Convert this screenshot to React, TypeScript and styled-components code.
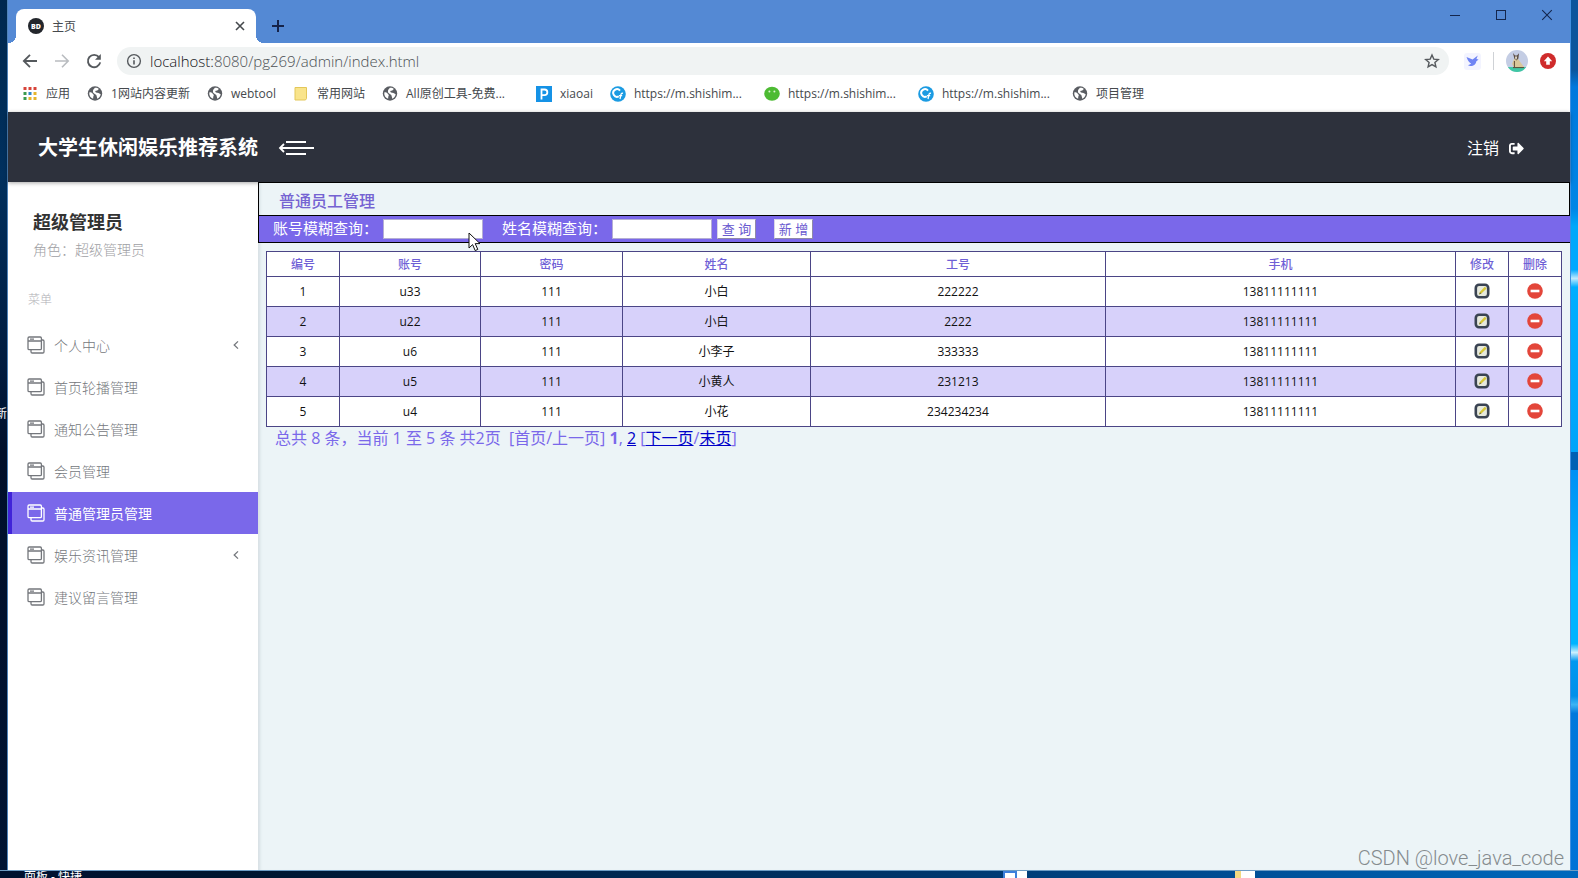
import React from 'react';
import styled, { createGlobalStyle } from 'styled-components';
import { FaSignOutAlt } from 'react-icons/fa';

const purple = '#7a68ea';
const line = '#4b4586';

const Global = createGlobalStyle`
  *, *::before, *::after { box-sizing: border-box; }
  body { margin: 0; font-family: "Open Sans", "Noto Sans CJK SC", sans-serif; font-size: 12px; color: #222; }
  button, input { font-family: inherit; }
`;

/* ---------- desktop behind the window ---------- */

const Desktop = styled.div`
  display: grid;
  grid-template-columns: 8px minmax(0, 1fr) 8px;
  grid-template-rows: minmax(0, 1fr) 8px;
  height: 100vh;
  overflow: hidden;
`;

const LeftEdge = styled.div`
  display: flex;
  justify-content: flex-end;
  align-items: center;
  overflow: hidden;
  padding-bottom: 42px;
  border-right: 1px solid #4f83b8;
  background: linear-gradient(#00284f, #00305e 20%, #001c40 42%, #000f2a 52%, #001433);
  color: #fff;
  font-size: 12px;
  line-height: 16px;
`;

const RightEdge = styled.div`
  border-left: 1px solid #3f8fe0;
  background: linear-gradient(
    #0a559c 0, #0a559c 8%, #0078dd 10%, #0086e6 24%, #00a8fa 26%, #00a8ff 31%,
    #bfeaff 32%, #00aeff 33%, #00a4fa 52%, #0060b4 52%, #0060b4 54%,
    #0090f4 54%, #00b4ff 66%, #00b4ff 74%, #c9f0ff 75%, #0098f0 76%,
    #0090ea 80%, #3cb4f4 81%, #0078dc 82%, #0072d6 100%
  );
`;

const BottomEdge = styled.div`
  grid-column: 1 / -1;
  display: flex;
  align-items: flex-start;
  overflow: hidden;
  padding-left: 24px;
  border-top: 1px solid #6d9cc4;
  background: linear-gradient(90deg, #001230, #00152f 15%, #00376e 60%, #005098 80%, #0068bd);
  color: #fff;
  font-size: 12px;
  line-height: 12px;
`;

const TaskWord = styled.span`
  flex: 0 0 63%;
`;

const TaskDocument = styled.span`
  flex: 0 0 14px;
  width: 14px;
  height: 8px;
  border: 2px solid #3d7fdb;
  border-bottom: 0;
  background: #fff;
`;

const TaskGap = styled.span`
  flex: 0 0 14%;
  border-left: 10px solid #fff;
  height: 8px;
`;

const TaskFolder = styled.span`
  flex: 0 0 20px;
  height: 8px;
  border-left: 6px solid #f3d982;
  background: #fff;
`;

/* ---------- browser window ---------- */

const Browser = styled.div`
  display: flex;
  flex-direction: column;
  min-width: 0;
  background: #fff;
`;

const TitleBar = styled.div`
  display: flex;
  align-items: flex-end;
  height: 43px;
  padding-left: 8px;
  background: #5489d4;
`;

const Tab = styled.div`
  position: relative;
  display: flex;
  align-items: center;
  width: 240px;
  height: 34px;
  padding: 0 10px 0 12px;
  border-radius: 8px 8px 0 0;
  background: #fff;
  color: #45494d;

  &::before, &::after {
    content: '';
    position: absolute;
    bottom: 0;
    width: 8px;
    height: 8px;
  }
  &::before { left: -8px; background: radial-gradient(circle at 0 0, transparent 8px, #fff 8px); }
  &::after { right: -8px; background: radial-gradient(circle at 100% 0, transparent 8px, #fff 8px); }
`;

const Favicon = styled.span`
  display: flex;
  align-items: center;
  justify-content: center;
  width: 16px;
  height: 16px;
  margin-right: 8px;
  border-radius: 50%;
  background: #23262c;
  color: #fff;
  font-size: 7px;
  font-weight: 800;
`;

const TabTitle = styled.span`
  flex: 1;
`;

const IconButton = styled.button<{ $size?: number }>`
  display: flex;
  align-items: center;
  justify-content: center;
  flex: none;
  width: ${(p) => p.$size ?? 16}px;
  height: ${(p) => p.$size ?? 16}px;
  padding: 0;
  border: 0;
  background: none;
  color: inherit;
`;

const NewTab = styled.div`
  display: flex;
  align-items: center;
  height: 34px;
  margin-left: 12px;
  color: #15234a;
`;

const WindowControls = styled.div`
  display: flex;
  align-self: flex-start;
  gap: 30px;
  margin-left: auto;
  padding: 7px 15px 0 0;
  color: #14264d;
`;

const Toolbar = styled.div`
  display: flex;
  align-items: center;
  height: 36px;
  padding: 0 14px;
  color: #55595d;
`;

const NavButtons = styled.div`
  display: flex;
  gap: 16px;
`;

const AddressBar = styled.div`
  display: flex;
  align-items: center;
  flex: 1;
  min-width: 0;
  height: 28px;
  margin: 0 15px;
  padding: 0 9px;
  border-radius: 14px;
  background: #f0f3f3;
`;

const UrlText = styled.span`
  flex: 1;
  margin-left: 8px;
  font-size: 15px;
  line-height: 20px;
  font-weight: 300;
  color: #4c5054;
`;

const UrlHost = styled.span`
  color: #101113;
`;

const Extensions = styled.div`
  display: flex;
  align-items: center;
  gap: 12px;
`;

const Separator = styled.span`
  width: 1px;
  height: 18px;
  background: #cfd2d6;
`;

const Bookmarks = styled.nav`
  display: flex;
  align-items: center;
  gap: 17px;
  height: 33px;
  padding: 0 14px 4px;
`;

const Bookmark = styled.a<{ $wide?: boolean }>`
  display: flex;
  align-items: center;
  gap: 8px;
  flex: none;
  width: ${(p) => (p.$wide ? '137px' : 'auto')};
  white-space: nowrap;
  color: #45494d;
  font-size: 12px;
  line-height: 16px;
  text-decoration: none;

  svg { width: 16px; }
`;

/* ---------- admin page ---------- */

const PageHeader = styled.header`
  position: relative;
  display: flex;
  align-items: center;
  flex: none;
  height: 70px;
  padding: 2px 46px 0 30px;
  background: #2d313c;
  box-shadow: 0 1px 4px rgba(0, 0, 0, 0.35);
  color: #fff;
`;

const SiteName = styled.h1`
  margin: 0 20px 0 0;
  font-size: 20px;
  line-height: 30px;
  font-weight: 700;
`;

const LogoutLink = styled.a`
  display: flex;
  align-items: center;
  gap: 10px;
  margin-left: auto;
  color: #fff;
  font-size: 16px;
  line-height: 24px;
  text-decoration: none;
`;

const PageBody = styled.div`
  display: flex;
  flex: 1;
  min-height: 0;
`;

const Sidebar = styled.aside`
  flex: none;
  width: 250px;
  padding-top: 24px;
  background: #fff;
`;

const UserName = styled.h2`
  margin: 0 25px;
  font-size: 18px;
  line-height: 32px;
  color: #333;
`;

const UserRole = styled.p`
  margin: 0 25px;
  font-size: 14px;
  line-height: 24px;
  font-weight: 300;
  color: #a0a0a4;
`;

const MenuCaption = styled.p`
  margin: 26px 20px 12px;
  font-size: 12px;
  line-height: 24px;
  font-weight: 300;
  color: #b0b0b5;
`;

const Menu = styled.ul`
  margin: 0;
  padding: 0;
  list-style: none;
`;

const MenuLink = styled.a<{ $active: boolean }>`
  display: flex;
  align-items: center;
  height: 42px;
  padding: 0 18px 0 15px;
  border-left: 4px solid ${(p) => (p.$active ? '#4023d8' : 'transparent')};
  background: ${(p) => (p.$active ? purple : 'transparent')};
  color: ${(p) => (p.$active ? '#fff' : '#74777c')};
  font-size: 14px;
  font-weight: ${(p) => (p.$active ? 400 : 300)};
  text-decoration: none;
`;

const MenuLabel = styled.span`
  flex: 1;
  margin-left: 9px;
`;

const Content = styled.main`
  position: relative;
  flex: 1;
  min-width: 0;
  background: #ecf4f7;
  box-shadow: inset 4px 0 3px -2px rgba(60, 70, 90, 0.12);
`;

const PanelTitle = styled.h3`
  display: flex;
  align-items: center;
  height: 34px;
  margin: 0;
  padding: 1px 20px 0;
  border: 1px solid #000;
  color: #7563d2;
  font-size: 16px;
  font-weight: 500;
`;

const SearchForm = styled.form`
  display: flex;
  align-items: center;
  height: 27px;
  padding-left: 14px;
  border: solid #000;
  border-width: 0 0 1px 1px;
  background: ${purple};
  color: #fff;
  font-size: 15px;
  line-height: 20px;
`;

const Field = styled.label`
  display: flex;
  align-items: center;
  gap: 5px;
  margin-right: 19px;

  & + & { margin-right: 5px; }
`;

const FieldName = styled.span`
  padding-bottom: 3px;
`;

const TextInput = styled.input`
  width: 100px;
  height: 20px;
  padding: 0 4px;
  border: 1px solid #b4aed4;
  background: #fff;
  font-size: 12px;
`;

const FormButton = styled.button`
  width: 39px;
  height: 20px;
  margin-right: 18px;
  padding: 0;
  border: 1px solid #d8d6e6;
  border-right-color: #8f8aa8;
  border-bottom-color: #8f8aa8;
  background: #fff;
  color: #6a5ad0;
  font-size: 13px;
  line-height: 18px;
`;

const TableWrap = styled.div`
  padding: 8px 8px 0;
`;

const DataTable = styled.table`
  width: 100%;
  table-layout: fixed;
  border-collapse: collapse;
  border: 1px solid ${line};
  background: #fff;
  text-align: center;
  font-size: 12px;
  line-height: 16px;
`;

const HeadCell = styled.th`
  height: 25px;
  padding: 2px 0 0;
  border: 1px solid ${line};
  color: #6f5fd6;
  font-weight: 500;
`;

const Row = styled.tr`
  &:nth-child(even) { background: #d7d1fa; }
`;

const Cell = styled.td`
  height: 30px;
  padding: 0;
  border: 1px solid ${line};
  color: #111;
`;

const CellButton = styled(IconButton)`
  margin: 0 auto 2px;
`;

const Pager = styled.p`
  margin: 0;
  padding-left: 9px;
  white-space: pre;
  color: ${purple};
  font-size: 16px;
  line-height: 22px;
  font-weight: 400;

  b { font-weight: 700; }
  a { color: #0000c8; }
`;

const Watermark = styled.div`
  position: absolute;
  right: 6px;
  bottom: 0;
  color: #858b8e;
  font-family: Roboto, "Liberation Sans", sans-serif;
  font-size: 20px;
  font-weight: 300;
  line-height: 24px;
`;

const Pointer = styled.svg`
  position: absolute;
  left: 210px;
  top: 50px;
`;

/* ---------- drawings ---------- */

const Globe = () => (
  <svg width="15" height="15" viewBox="0 0 15 15">
    <circle cx="7.5" cy="7.5" r="7.2" fill="#5a5d62" />
    <path d="M1.8 6.6C3.4 5.8 4.6 6.6 5.4 8 6.4 8.6 6.6 9.6 5.8 10.6L5.6 12.8C3 12 1.4 9.6 1.8 6.6Z M7.4 1.7C9 1.5 10.4 2 11.4 2.9L9.8 4.6 7.6 5 8.4 6.6 11 7 13.2 8.2C12.8 10.4 11.6 12 9.8 12.8L9.4 11 8.8 9 6.6 7.6 5.4 6.2 5.6 4Z" fill="#fff" />
  </svg>
);

const AppsGrid = () => (
  <svg width="15" height="15" viewBox="0 0 15 15">
    {['#d7443a', '#d7443a', '#d7443a', '#3b9a4e', '#2f86c9', '#e6b52c', '#3b9a4e', '#e6b52c', '#e6b52c'].map((c, i) => (
      <rect key={i} x={1 + (i % 3) * 5} y={1 + Math.floor(i / 3) * 5} width="3" height="3" fill={c} />
    ))}
  </svg>
);

const Folder = () => (
  <svg width="14" height="15" viewBox="0 0 14 15">
    <path d="M1 1.5H12.5V12.5L11.5 14H1Z" fill="#f9e48b" stroke="#e3c75a" />
  </svg>
);

const PMark = () => (
  <svg width="16" height="16" viewBox="0 0 16 16">
    <rect width="16" height="16" fill="#1592e6" />
    <path d="M5.5 13.5V3.5H8.5A2.8 2.8 0 0 1 8.5 9.2H5.5" fill="none" stroke="#fff" strokeWidth="1.8" />
  </svg>
);

const CMark = () => (
  <svg width="16" height="16" viewBox="0 0 16 16">
    <circle cx="8" cy="8" r="7.8" fill="#1b9be2" />
    <path d="M10 4.6A3.8 3.8 0 1 0 8.8 10.4" fill="none" stroke="#fff" strokeWidth="2" />
    <path d="M13 7.4C11.4 6.8 11 8 10.8 9.2L10 13M9 9.6H12.2" fill="none" stroke="#fff" strokeWidth="1.3" />
  </svg>
);

const GreenFace = () => (
  <svg width="16" height="16" viewBox="0 0 16 16">
    <ellipse cx="8" cy="7.8" rx="7.8" ry="7" fill="#4dbb33" />
    <circle cx="5.4" cy="5.6" r="1" fill="#d9f5d0" />
    <circle cx="10.4" cy="5.6" r="1" fill="#d9f5d0" />
  </svg>
);

const CloseMark = ({ size, width }: { size: number; width: number }) => (
  <svg width={size} height={size} viewBox="0 0 10 10">
    <path d="M1 1 9 9M9 1 1 9" stroke="currentColor" strokeWidth={width} />
  </svg>
);

const BackArrow = () => (
  <svg width="16" height="16" viewBox="0 0 16 16" fill="none" stroke="currentColor" strokeWidth="1.8">
    <path d="M15 8H2M8 1.8 1.8 8 8 14.2" />
  </svg>
);

const ForwardArrow = () => (
  <svg width="16" height="16" viewBox="0 0 16 16" fill="none" stroke="#b9bcc0" strokeWidth="1.6">
    <path d="M1 8H14M8 1.8 14.2 8 8 14.2" />
  </svg>
);

const Reload = () => (
  <svg width="16" height="16" viewBox="0 0 16 16" fill="none" stroke="currentColor" strokeWidth="1.9">
    <path d="M13 4.2A6.2 6.2 0 1 0 14.2 9.4" />
    <path d="M14.8 1V6.8H9Z" fill="currentColor" stroke="none" />
  </svg>
);

const Info = () => (
  <svg width="16" height="16" viewBox="0 0 16 16" fill="none" stroke="currentColor" strokeWidth="1.4">
    <circle cx="8" cy="8" r="6.4" />
    <path d="M8 7.2V11.6M8 4.4V6" strokeWidth="1.6" />
  </svg>
);

const Star = () => (
  <svg width="16" height="16" viewBox="0 0 16 16" fill="none" stroke="currentColor" strokeWidth="1.4">
    <path d="M8 2 9.8 6.1 14.3 6.5 10.9 9.5 11.9 13.9 8 11.6 4.1 13.9 5.1 9.5 1.7 6.5 6.2 6.1Z" />
  </svg>
);

const Bird = () => (
  <svg width="17" height="17" viewBox="0 0 17 17">
    <rect width="17" height="17" rx="3" fill="#f3f4ff" />
    <path d="M2.5 4 8.6 6.4 13.8 2.4 12.4 6 14.6 6.6 12.2 8.4C12 11 9.8 13.2 6 13L4 12.2 7.2 10.8C5 9.2 3.4 7 2.5 4Z" fill="#6f84f4" />
  </svg>
);

const Avatar = () => (
  <svg width="22" height="22" viewBox="0 0 22 22">
    <defs>
      <clipPath id="avatarDisc"><circle cx="11" cy="11" r="11" /></clipPath>
    </defs>
    <g clipPath="url(#avatarDisc)">
      <rect width="22" height="22" fill="#c4cde4" />
      <rect y="17" width="22" height="5" fill="#3fc7a4" />
      <path d="M8 9H12L15 13 18 17H8L6 14Z" fill="#d9c79a" />
      <path d="M7 3 9 5.4H11L13 3.2 12.4 8.4 10.4 10.4 8.4 8.8Z" fill="#5a4c42" />
      <path d="M9 6.4H11.2L10.6 9.4H9.4Z" fill="#e4dccb" />
      <path d="M8.4 11V17M7 17.6H18" stroke="#5d4a38" strokeWidth="1" />
    </g>
  </svg>
);

const UpdateBadge = () => (
  <svg width="16" height="16" viewBox="0 0 16 16">
    <circle cx="8" cy="8" r="8" fill="#cf2b2b" />
    <path d="M8 3.6 12.2 8.2H9.8V11.8H6.2V8.2H3.8Z" fill="#fff" />
  </svg>
);

const MenuToggle = () => (
  <svg width="36" height="18" viewBox="0 0 36 18" fill="none" stroke="#fff" strokeWidth="2">
    <path d="M8 3H28M2 9H36M8 15H28" />
    <path d="M6 5 2 9 6 13" strokeWidth="1.8" />
  </svg>
);

const Layers = () => (
  <svg width="18" height="18" viewBox="0 0 18 18" fill="none" stroke="currentColor" strokeWidth="1.3">
    <rect x="1" y="1" width="13.4" height="12.6" rx="1.2" />
    <path d="M1 5H14.4M3 3.1H7" />
    <path d="M14.4 4H15.8A1.2 1.2 0 0 1 17 5.2V15.8A1.2 1.2 0 0 1 15.8 17H5.2A1.2 1.2 0 0 1 4 15.8V13.6" />
  </svg>
);

const Chevron = () => (
  <svg width="8" height="10" viewBox="0 0 8 10" fill="none" stroke="currentColor" strokeWidth="1.3">
    <path d="M6 1.4 2.2 5 6 8.6" />
  </svg>
);

const EditIcon = () => (
  <svg width="16" height="16" viewBox="0 0 16 16">
    <rect x="1.8" y="1.8" width="12.4" height="12.4" rx="3.2" fill="#e6e9dd" stroke="#3a4352" strokeWidth="2.6" />
    <path d="M5 11.4 5.8 9 10.8 3.8 12.6 5.4 7.4 10.6Z" fill="#d8c83a" />
    <path d="M5 11.4 7.4 10.6 6 9.2Z" fill="#6b6a45" />
  </svg>
);

const DeleteIcon = () => (
  <svg width="16" height="16" viewBox="0 0 16 16">
    <circle cx="8" cy="8" r="7.8" fill="#e3463a" />
    <rect x="3.6" y="6.7" width="8.8" height="2.6" fill="#fff" />
  </svg>
);

/* ---------- data ---------- */

const bookmarks = [
  { icon: <AppsGrid />, label: '应用' },
  { icon: <Globe />, label: '1网站内容更新' },
  { icon: <Globe />, label: 'webtool' },
  { icon: <Folder />, label: '常用网站' },
  { icon: <Globe />, label: 'All原创工具-免费...', wide: true },
  { icon: <PMark />, label: 'xiaoai' },
  { icon: <CMark />, label: 'https://m.shishim...', wide: true },
  { icon: <GreenFace />, label: 'https://m.shishim...', wide: true },
  { icon: <CMark />, label: 'https://m.shishim...', wide: true },
  { icon: <Globe />, label: '项目管理' },
];

const menu = [
  { label: '个人中心', sub: true },
  { label: '首页轮播管理' },
  { label: '通知公告管理' },
  { label: '会员管理' },
  { label: '普通管理员管理', active: true },
  { label: '娱乐资讯管理', sub: true },
  { label: '建议留言管理' },
];

const columns = [
  { title: '编号', share: 73 },
  { title: '账号', share: 141 },
  { title: '密码', share: 142 },
  { title: '姓名', share: 188 },
  { title: '工号', share: 295 },
  { title: '手机', share: 350 },
  { title: '修改', share: 53 },
  { title: '删除', share: 53 },
];
const totalShare = columns.reduce((sum, c) => sum + c.share, 0);

const staff = [
  ['1', 'u33', '111', '小白', '222222', '13811111111'],
  ['2', 'u22', '111', '小白', '2222', '13811111111'],
  ['3', 'u6', '111', '小李子', '333333', '13811111111'],
  ['4', 'u5', '111', '小黄人', '231213', '13811111111'],
  ['5', 'u4', '111', '小花', '234234234', '13811111111'],
];

export default function App() {
  return (
    <Desktop>
      <Global />
      <LeftEdge>新</LeftEdge>
      <Browser>
        <TitleBar>
          <Tab>
            <Favicon>BD</Favicon>
            <TabTitle>主页</TabTitle>
            <IconButton $size={12} aria-label="关闭标签页"><CloseMark size={10} width={1.6} /></IconButton>
          </Tab>
          <NewTab>
            <IconButton $size={20} aria-label="新标签页">
              <svg width="14" height="14" viewBox="0 0 14 14"><path d="M7 1V13M1 7H13" stroke="currentColor" strokeWidth="2" /></svg>
            </IconButton>
          </NewTab>
          <WindowControls>
            <IconButton aria-label="最小化">
              <svg width="12" height="12" viewBox="0 0 12 12"><path d="M1 6.5H11" stroke="currentColor" /></svg>
            </IconButton>
            <IconButton aria-label="最大化">
              <svg width="12" height="12" viewBox="0 0 12 12"><rect x="1.5" y="1.5" width="9" height="9" fill="none" stroke="currentColor" /></svg>
            </IconButton>
            <IconButton aria-label="关闭"><CloseMark size={12} width={0.9} /></IconButton>
          </WindowControls>
        </TitleBar>

        <Toolbar>
          <NavButtons>
            <IconButton aria-label="后退"><BackArrow /></IconButton>
            <IconButton aria-label="前进"><ForwardArrow /></IconButton>
            <IconButton aria-label="刷新"><Reload /></IconButton>
          </NavButtons>
          <AddressBar>
            <Info />
            <UrlText><UrlHost>localhost:</UrlHost>8080/pg269/admin/index.html</UrlText>
            <IconButton aria-label="收藏"><Star /></IconButton>
          </AddressBar>
          <Extensions>
            <IconButton $size={17} aria-label="扩展"><Bird /></IconButton>
            <Separator />
            <IconButton $size={22} aria-label="用户"><Avatar /></IconButton>
            <IconButton aria-label="更新"><UpdateBadge /></IconButton>
          </Extensions>
        </Toolbar>

        <Bookmarks>
          {bookmarks.map((b, i) => (
            <Bookmark key={i} href="#" $wide={b.wide}>{b.icon}{b.label}</Bookmark>
          ))}
        </Bookmarks>

        <PageHeader>
          <SiteName>大学生休闲娱乐推荐系统</SiteName>
          <IconButton $size={36} aria-label="收起菜单"><MenuToggle /></IconButton>
          <LogoutLink href="#">注销<FaSignOutAlt size={15} /></LogoutLink>
        </PageHeader>

        <PageBody>
          <Sidebar>
            <UserName>超级管理员</UserName>
            <UserRole>角色：超级管理员</UserRole>
            <MenuCaption>菜单</MenuCaption>
            <Menu>
              {menu.map((m) => (
                <li key={m.label}>
                  <MenuLink href="#" $active={!!m.active}>
                    <Layers />
                    <MenuLabel>{m.label}</MenuLabel>
                    {m.sub && <Chevron />}
                  </MenuLink>
                </li>
              ))}
            </Menu>
          </Sidebar>

          <Content>
            <PanelTitle>普通员工管理</PanelTitle>
            <SearchForm onSubmit={(e) => e.preventDefault()}>
              <Field><FieldName>账号模糊查询：</FieldName><TextInput type="text" /></Field>
              <Field><FieldName>姓名模糊查询：</FieldName><TextInput type="text" /></Field>
              <FormButton type="submit">查 询</FormButton>
              <FormButton type="button">新 增</FormButton>
            </SearchForm>
            <TableWrap>
              <DataTable>
                <colgroup>
                  {columns.map((c) => (
                    <col key={c.title} style={{ width: `${(c.share / totalShare) * 100}%` }} />
                  ))}
                </colgroup>
                <thead>
                  <tr>{columns.map((c) => <HeadCell key={c.title} scope="col">{c.title}</HeadCell>)}</tr>
                </thead>
                <tbody>
                  {staff.map((row) => (
                    <Row key={row[0]}>
                      {row.map((value, i) => <Cell key={i}>{value}</Cell>)}
                      <Cell><CellButton aria-label="修改"><EditIcon /></CellButton></Cell>
                      <Cell><CellButton aria-label="删除"><DeleteIcon /></CellButton></Cell>
                    </Row>
                  ))}
                </tbody>
              </DataTable>
              <Pager>
                总共 8 条，当前 1 至 5 条 共2页{'  '}[首页/上一页] <b>1</b>, <a href="#">2</a> [<a href="#">下一页</a>/<a href="#">末页</a>]
              </Pager>
            </TableWrap>
            <Pointer width="14" height="20" viewBox="0 0 14 20">
              <path d="M1 1V16L4.6 12.6 7.2 18.6 9.8 17.4 7.2 11.6H12Z" fill="#fff" stroke="#111" />
            </Pointer>
            <Watermark>CSDN @love_java_code</Watermark>
          </Content>
        </PageBody>
      </Browser>
      <RightEdge />
      <BottomEdge>
        <TaskWord>面板 - 快捷</TaskWord>
        <TaskDocument />
        <TaskGap />
        <TaskFolder />
      </BottomEdge>
    </Desktop>
  );
}
